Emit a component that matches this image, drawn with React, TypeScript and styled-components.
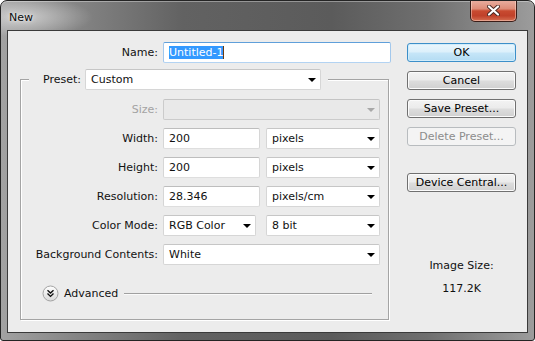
import React from 'react';
import styled, { createGlobalStyle } from 'styled-components';

const GlobalStyle = createGlobalStyle`
  html, body { margin: 0; padding: 0; background: #fff; }
  body {
    font-family: "DejaVu Sans", "Liberation Sans", sans-serif;
    font-size: 11px;
    color: #111;
  }
  * { box-sizing: border-box; }
`;

const Window = styled.div`
  width: 535px;
  height: 341px;
  display: flex;
  flex-direction: column;
  padding: 0 6px 7px 6px;
  border: 1px solid #242424;
  border-radius: 7px 7px 3px 3px;
  overflow: hidden;
  background:
    radial-gradient(ellipse 70px 20px at 22px 16px, rgba(255, 255, 255, 0.5), rgba(255, 255, 255, 0)),
    linear-gradient(90deg, #a2a2a2 0%, #858585 14%, #626262 34%, #5b5b5b 62%, #6f6f6f 80%, #9c9c9c 100%);
  box-shadow: inset 0 1px 0 rgba(255, 255, 255, 0.35);
`;

const TitleBar = styled.div`
  height: 29px;
  flex: none;
  display: flex;
  justify-content: space-between;
  align-items: flex-start;
`;

const Title = styled.div`
  margin: 10px 0 0 2px;
  line-height: 13px;
  color: #0c0c0c;
  text-shadow: 0 0 6px rgba(255, 255, 255, 0.8), 0 0 2px rgba(255, 255, 255, 0.6);
`;

const CloseButton = styled.div`
  width: 47px;
  height: 22px;
  margin: -1px 11px 0 0;
  display: flex;
  align-items: center;
  justify-content: center;
  border: 1px solid #3a1d18;
  border-top: none;
  border-radius: 0 0 5px 5px;
  background: linear-gradient(#eab0a2 0%, #de8c78 42%, #c84a30 52%, #c0412a 75%, #d56f52 100%);
  box-shadow: inset 0 0 0 1px rgba(255, 230, 220, 0.45);
`;

const Client = styled.div`
  flex: 1;
  display: flex;
  background: #ececec;
  border: 1px solid #3a3a3a;
`;

const LeftPane = styled.div`
  width: 391px;
  padding-top: 11px;
`;

const NameRow = styled.div`
  display: grid;
  grid-template-columns: 150px 228px;
  column-gap: 5px;
  align-items: center;
`;

const Label = styled.div<{ $disabled?: boolean }>`
  text-align: right;
  white-space: nowrap;
  color: ${(p) => (p.$disabled ? '#a3a3a3' : '#121212')};
`;

const TextBox = styled.div<{ $width?: number; $focused?: boolean }>`
  width: ${(p) => (p.$width ? `${p.$width}px` : '100%')};
  height: 21px;
  display: flex;
  align-items: center;
  padding-left: 5px;
  background: #fff;
  border: 1px solid;
  border-radius: 2px;
  border-color: ${(p) =>
    p.$focused ? '#5f9fda #a3c8ec #b3d3f2 #a3c8ec' : '#bdbdbd #d6d6d6 #dedede #d6d6d6'};
  white-space: nowrap;
`;

const Selection = styled.span`
  background: #3399ff;
  color: #fff;
  line-height: 13px;
  border-right: 1px solid #6b3b10;
`;

const SelectBox = styled.div<{ $width: number; $disabled?: boolean }>`
  width: ${(p) => p.$width}px;
  height: 21px;
  display: flex;
  align-items: center;
  padding: 0 4px 0 5px;
  border: 1px solid ${(p) => (p.$disabled ? '#cbcbcb' : '#d6d6d6')};
  border-top-color: ${(p) => (p.$disabled ? '#c4c4c4' : '#c6c6c6')};
  border-radius: 2px;
  background: ${(p) => (p.$disabled ? '#e9e9e9' : '#fff')};
  white-space: nowrap;
  color: #111;
`;

const Arrow = styled.svg`
  margin-left: auto;
  flex: none;
`;

const Group = styled.fieldset`
  margin: 5px 0 0 12px;
  width: 369px;
  padding: 0;
  min-width: 0;
  border: 1px solid #a4a4a4;
  box-shadow: inset 1px 1px 0 #fff, 1px 1px 0 #fff;
`;

const Legend = styled.legend`
  margin-left: 8px;
  padding: 0 7px 0 14px;
  background: #ececec;
`;

const LegendInner = styled.div`
  display: flex;
  align-items: center;
  gap: 4px;
  padding-top: 1px;
`;

const FormGrid = styled.div`
  display: grid;
  grid-template-columns: 137px 218px;
  column-gap: 5px;
  row-gap: 8px;
  align-items: center;
  padding: 9px 7px 15px 0;
`;

const Pair = styled.div`
  width: 217px;
  display: flex;
  justify-content: space-between;
`;

const AdvancedRow = styled.div`
  grid-column: 1 / -1;
  height: 21px;
  margin-top: 10px;
  display: flex;
  align-items: center;
  padding: 0 9px 0 21px;
`;

const AdvancedText = styled.span`
  margin: 0 6px 0 5px;
  color: #121212;
`;

const Rule = styled.div`
  flex: 1;
  height: 1px;
  background: #a0a0a0;
  box-shadow: 0 1px 0 #fafafa;
`;

const RightPane = styled.div`
  width: 109px;
  margin-left: 8px;
  padding-top: 12px;
  display: flex;
  flex-direction: column;
  gap: 9px;
`;

const Button = styled.button<{ $primary?: boolean; $spaced?: boolean }>`
  width: 109px;
  height: 19px;
  padding: 0;
  margin-top: ${(p) => (p.$spaced ? '18px' : '0')};
  font: inherit;
  line-height: 16px;
  color: #000;
  border-radius: 3px;
  border: 1px solid ${(p) => (p.$primary ? '#3c8fc9' : '#707070')};
  background: ${(p) =>
    p.$primary
      ? 'linear-gradient(#eaf6fd 0%, #dcf0fb 48%, #c6e6f8 52%, #b4dcf3 100%)'
      : 'linear-gradient(#f3f3f3 0%, #ebebeb 48%, #dddddd 52%, #d0d0d0 100%)'};
  box-shadow: inset 0 0 0 1px ${(p) => (p.$primary ? '#d2ecfa' : '#fbfbfb')};

  &:disabled {
    border-color: #b8bcbf;
    background: #f4f4f4;
    color: #8c8c8c;
    box-shadow: none;
  }
`;

const SizeInfo = styled.div`
  margin-top: 58px;
  display: flex;
  flex-direction: column;
  align-items: center;
  gap: 9px;
  line-height: 14px;
  color: #111;
`;

const DownArrow = ({ color = '#000' }: { color?: string }) => (
  <Arrow width="8" height="4" viewBox="0 0 8 4">
    <path d="M0 0h8L4 4z" fill={color} />
  </Arrow>
);

const Select = ({
  width,
  value,
  disabled,
}: {
  width: number;
  value?: string;
  disabled?: boolean;
}) => (
  <SelectBox $width={width} $disabled={disabled}>
    {value}
    <DownArrow color={disabled ? '#a8a8a8' : '#000'} />
  </SelectBox>
);

const AdvancedIcon = () => (
  <svg width="17" height="17" viewBox="0 0 17 17">
    <defs>
      <linearGradient id="adv" x1="0" y1="0" x2="0" y2="1">
        <stop offset="0" stopColor="#ffffff" />
        <stop offset="1" stopColor="#d9d9d9" />
      </linearGradient>
    </defs>
    <circle cx="8.5" cy="8.5" r="7.5" fill="url(#adv)" stroke="#a2a2a2" />
    <path
      d="M5.5 5.2l3 2.8 3-2.8M5.5 8.6l3 2.8 3-2.8"
      fill="none"
      stroke="#111"
      strokeWidth="1.4"
    />
  </svg>
);

const CloseGlyph = () => (
  <svg width="13" height="11" viewBox="0 0 13 11">
    <path d="M2 1.5l9 8M11 1.5l-9 8" stroke="#4a2a24" strokeWidth="4" strokeLinecap="round" />
    <path d="M2 1.5l9 8M11 1.5l-9 8" stroke="#fff" strokeWidth="2.2" strokeLinecap="round" />
  </svg>
);

const App = (): JSX.Element => {
  return (
    <>
      <GlobalStyle />
      <Window>
        <TitleBar>
          <Title>New</Title>
          <CloseButton>
            <CloseGlyph />
          </CloseButton>
        </TitleBar>
        <Client>
          <LeftPane>
            <NameRow>
              <Label>Name:</Label>
              <TextBox $focused>
                <Selection>Untitled-1</Selection>
              </TextBox>
            </NameRow>
            <Group>
              <Legend>
                <LegendInner>
                  <Label>Preset:</Label>
                  <Select width={236} value="Custom" />
                </LegendInner>
              </Legend>
              <FormGrid>
                <Label $disabled>Size:</Label>
                <Select width={217} disabled />

                <Label>Width:</Label>
                <Pair>
                  <TextBox $width={97}>200</TextBox>
                  <Select width={114} value="pixels" />
                </Pair>

                <Label>Height:</Label>
                <Pair>
                  <TextBox $width={97}>200</TextBox>
                  <Select width={114} value="pixels" />
                </Pair>

                <Label>Resolution:</Label>
                <Pair>
                  <TextBox $width={97}>28.346</TextBox>
                  <Select width={114} value="pixels/cm" />
                </Pair>

                <Label>Color Mode:</Label>
                <Pair>
                  <Select width={93} value="RGB Color" />
                  <Select width={114} value="8 bit" />
                </Pair>

                <Label>Background Contents:</Label>
                <Select width={217} value="White" />

                <AdvancedRow>
                  <AdvancedIcon />
                  <AdvancedText>Advanced</AdvancedText>
                  <Rule />
                </AdvancedRow>
              </FormGrid>
            </Group>
          </LeftPane>
          <RightPane>
            <Button $primary>OK</Button>
            <Button>Cancel</Button>
            <Button>Save Preset...</Button>
            <Button disabled>Delete Preset...</Button>
            <Button $spaced>Device Central...</Button>
            <SizeInfo>
              <span>Image Size:</span>
              <span>117.2K</span>
            </SizeInfo>
          </RightPane>
        </Client>
      </Window>
    </>
  );
};

export default App;
